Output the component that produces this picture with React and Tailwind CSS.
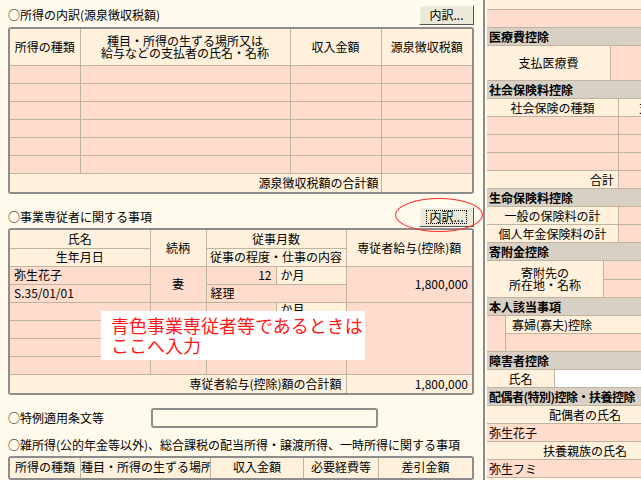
const F = { fontFamily: '"Noto Sans CJK JP", "Liberation Sans", sans-serif' }
const H = 'bg-[#fff1dc]'
const P = 'bg-[#ffdccb]'
const td = 'border border-[#c0b4a0] p-0 leading-none'

function Btn({ focus }) {
  return (
    <div className="w-[55px] h-[20px] bg-[#ece9d8] border border-t-white border-l-white border-r-[#555] border-b-[#555] flex items-center justify-center text-[12px]">
      <span className={focus ? 'border border-dotted border-black px-0.5 leading-[12px]' : ''}>内訳...</span>
    </div>
  )
}

function Right() {
  const hd = 'h-[18px] bg-[#d8d0c4] border-b border-[#c0b4a0] font-bold text-[12px] leading-none pl-0.5 flex items-center whitespace-nowrap'
  const row = 'h-[18px] border-b border-[#c0b4a0] flex text-[12px] leading-none'
  return (
    <div className="w-[154px] overflow-hidden">
      <div className="w-[200px]">
        <div className={`h-[10px] ${H} border-b border-[#c0b4a0]`} />
        <div className={`h-[18px] ${P} border-b border-[#c0b4a0]`} />
        <div className={hd}>医療費控除</div>
        <div className="h-[35px] border-b border-[#c0b4a0] flex text-[12px] leading-none">
          <div className={`w-[124px] ${H} flex items-center justify-center border-r border-[#c0b4a0]`}>支払医療費</div>
          <div className={`flex-1 ${P}`} />
        </div>
        <div className={hd}>社会保険料控除</div>
        <div className={row}>
          <div className={`w-[132px] ${H} flex items-center justify-center border-r border-[#c0b4a0]`}>社会保険の種類</div>
          <div className={`flex-1 ${H} pl-5 flex items-center`}>支払</div>
        </div>
        {[0, 1, 2].map(i => (
          <div key={i} className={row}><div className={`w-[132px] ${P} border-r border-[#c0b4a0]`} /><div className={`flex-1 ${P}`} /></div>
        ))}
        <div className={row}>
          <div className={`w-[132px] ${H} flex items-center justify-end pr-1 border-r border-[#c0b4a0]`}>合計</div>
          <div className={`flex-1 ${P}`} />
        </div>
        <div className={hd}>生命保険料控除</div>
        {['一般の保険料の計', '個人年金保険料の計'].map(t => (
          <div key={t} className={row}>
            <div className={`w-[132px] ${H} flex items-center justify-center border-r border-[#c0b4a0]`}>{t}</div>
            <div className={`flex-1 ${P}`} />
          </div>
        ))}
        <div className={hd}>寄附金控除</div>
        <div className="h-[37px] border-b border-[#c0b4a0] flex text-[12px]">
          <div className={`w-[117px] ${H} flex items-center justify-center text-center leading-[12px] border-r border-[#c0b4a0]`}>寄附先の<br />所在地・名称</div>
          <div className="flex-1 flex flex-col"><div className={`flex-1 ${P} border-b border-[#c0b4a0]`} /><div className={`flex-1 ${P}`} /></div>
        </div>
        <div className={hd}>本人該当事項</div>
        <div className="flex border-b border-[#c0b4a0]">
          <div className={`w-[19px] ${P} border-r border-[#c0b4a0]`} />
          <div className="flex-1">
            <div className={`h-[18px] ${H} border-b border-[#c0b4a0] text-[12px] leading-none pl-1.5 flex items-center`}>寡婦(寡夫)控除</div>
            <div className={`h-[17px] ${P}`} />
          </div>
        </div>
        <div className={hd}>障害者控除</div>
        <div className={row}>
          <div className={`w-[68px] ${H} flex items-center justify-center border-r border-[#c0b4a0]`}>氏名</div>
          <div className="flex-1 bg-white" />
        </div>
        <div className={`${hd} tracking-[-0.5px] text-[11.5px]`}>配偶者(特別)控除・扶養控除</div>
        <div className={`${row} ${H} items-center pl-[62px]`}>配偶者の氏名</div>
        <div className={`${row} ${P} items-center pl-0.5`}>弥生花子</div>
        <div className={`${row} ${H} items-center pl-[56px]`}>扶養親族の氏名</div>
        <div className={`${row} ${P} items-center pl-0.5`}>弥生フミ</div>
      </div>
    </div>
  )
}

export default function App() {
  const r = 'h-[18px]'
  return (
    <div style={F} className="w-[641px] h-[480px] overflow-hidden bg-[#fffaeb] text-[12px] text-black flex">
      <div className="w-[483px] relative pl-2 pr-2">
        <div className="flex items-center justify-between h-[27px] pt-0.5">
          <span>○所得の内訳(源泉徴収税額)</span>
          <div className="mr-[1px]"><Btn /></div>
        </div>
        <div className="w-[466px] border-2 border-[#8c8c8c] rounded-[3px] overflow-hidden">
          <table className="w-full border-collapse table-fixed">
            <colgroup><col className="w-[70px]" /><col className="w-[210px]" /><col className="w-[91px]" /><col /></colgroup>
            <tbody>
              <tr className={`h-[36px] ${H}`}>
                <td className={`${td} text-center border-t-0 border-l-0`}>所得の種類</td>
                <td className={`${td} text-center leading-[12px] border-t-0`}>種目・所得の生ずる場所又は<br />給与などの支払者の氏名・名称</td>
                <td className={`${td} text-center border-t-0`}>収入金額</td>
                <td className={`${td} text-center border-t-0 border-r-0`}>源泉徴収税額</td>
              </tr>
              {[0, 1, 2, 3, 4, 5].map(i => (
                <tr key={i} className={`${r} ${P}`}>
                  <td className={`${td} border-l-0`} /><td className={td} /><td className={td} /><td className={`${td} border-r-0`} />
                </tr>
              ))}
              <tr className={`h-[19px] ${H}`}>
                <td colSpan={3} className={`${td} text-right pr-0.5 border-l-0 border-b-0`}>源泉徴収税額の合計額</td>
                <td className={`${td} border-r-0 border-b-0`} />
              </tr>
            </tbody>
          </table>
        </div>

        <div className="flex items-center justify-between h-[34px] pt-3">
          <span>○事業専従者に関する事項</span>
          <div className="mr-[1px]"><Btn focus /></div>
        </div>
        <div className="absolute left-[395px] top-[198px] w-[88px] h-[34px] rounded-[50%] border border-[#ff3030]" />
        <div className="w-[466px] border-2 border-[#8c8c8c] rounded-[3px] overflow-hidden">
          <table className="w-full border-collapse table-fixed">
            <colgroup><col className="w-[140px]" /><col className="w-[56px]" /><col className="w-[70px]" /><col className="w-[70px]" /><col /></colgroup>
            <tbody>
              <tr className={`${r} ${H}`}>
                <td className={`${td} text-center border-t-0 border-l-0`}>氏名</td>
                <td rowSpan={2} className={`${td} text-center border-t-0`}>続柄</td>
                <td colSpan={2} className={`${td} text-center border-t-0`}>従事月数</td>
                <td rowSpan={2} className={`${td} text-center border-t-0 border-r-0`}>専従者給与(控除)額</td>
              </tr>
              <tr className={`${r} ${H}`}>
                <td className={`${td} text-center border-l-0`}>生年月日</td>
                <td colSpan={2} className={`${td} text-center`}>従事の程度・仕事の内容</td>
              </tr>
              <tr className={`${r}`}>
                <td className={`${td} ${P} pl-1 border-l-0`}>弥生花子</td>
                <td rowSpan={2} className={`${td} ${P} text-center`}>妻</td>
                <td className={`${td} ${P} text-right pr-1`}>12</td>
                <td className={`${td} ${H} pl-1`}>か月</td>
                <td rowSpan={2} className={`${td} ${P} text-right pr-1 border-r-0`}>1,800,000</td>
              </tr>
              <tr className={r}>
                <td className={`${td} ${P} pl-1 border-l-0`}>S.35/01/01</td>
                <td colSpan={2} className={`${td} ${P} pl-1`}>経理</td>
              </tr>
              <tr className={r}>
                <td className={`${td} ${P} border-l-0`} />
                <td rowSpan={4} className={`${td} ${P}`} />
                <td className={`${td} ${P}`} />
                <td className={`${td} ${H} pl-1 align-top`}>か月</td>
                <td rowSpan={4} className={`${td} ${P} border-r-0`} />
              </tr>
              {[0, 1, 2].map(i => (
                <tr key={i} className={r}>
                  <td className={`${td} ${P} border-l-0`} />
                  <td colSpan={2} className={`${td} ${P}`} />
                </tr>
              ))}
              <tr className={`h-[19px] ${H}`}>
                <td colSpan={4} className={`${td} text-right pr-1 border-l-0 border-b-0`}>専従者給与(控除)額の合計額</td>
                <td className={`${td} text-right pr-1 border-r-0 border-b-0`}>1,800,000</td>
              </tr>
            </tbody>
          </table>
        </div>
        <div className="absolute left-[101px] top-[311px] w-[264px] h-[49px] bg-white text-[#ff1a1a] text-[18px] leading-[20px] pl-[10px] pt-[4px]">
          青色事業専従者等であるときは<br />ここへ入力
        </div>

        <div className="flex items-center h-[20px] mt-[13px]">
          <span className="w-[143px]">○特例適用条文等</span>
          <div className="w-[227px] h-[20px] border-2 border-[#8c8c8c] rounded-[3px] bg-[#fffaeb]" />
        </div>
        <div className="mt-[9px] h-[16px] leading-[16px] whitespace-nowrap">○雑所得(公的年金等以外)、総合課税の配当所得・譲渡所得、一時所得に関する事項</div>
        <div className="w-[466px] border-2 border-[#8c8c8c] rounded-[3px] mt-[3px]">
          <div className={`flex h-[20px] ${H} leading-[18px]`}>
            {[['所得の種類', 'w-[71px]'], ['種目・所得の生ずる場所', 'w-[130px]'], ['収入金額', 'w-[93px]'], ['必要経費等', 'w-[75px]'], ['差引金額', 'flex-1']].map(([t, w]) => (
              <div key={t} className={`${w} text-center border-r border-[#c0b4a0] last:border-r-0 whitespace-nowrap overflow-hidden`}>{t}</div>
            ))}
          </div>
        </div>
      </div>
      <div className="w-[4px] bg-[#fffaeb] border-l-2 border-[#8c8c8c]" />
      <Right />
    </div>
  )
}
